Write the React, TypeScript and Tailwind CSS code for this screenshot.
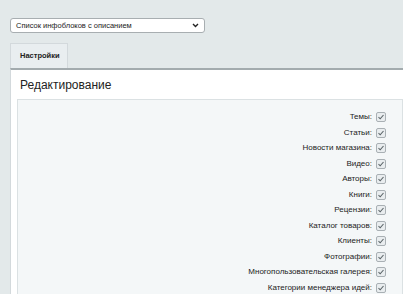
import React from 'react';

const items = [
  'Темы',
  'Статьи',
  'Новости магазина',
  'Видео',
  'Авторы',
  'Книги',
  'Рецензии',
  'Каталог товаров',
  'Клиенты',
  'Фотографии',
  'Многопользовательская галерея',
  'Категории менеджера идей',
];

const Check: React.FC = () => (
  <span className="w-[10px] h-[10px] flex-shrink-0 rounded-[2px] border border-[#a9b0b4] bg-[#e9edef] flex items-center justify-center">
    <svg width="8" height="8" viewBox="0 0 8 8">
      <path d="M1.5 4.2 L3.2 5.8 L6.5 2" fill="none" stroke="#5b6468" strokeWidth="1.1" />
    </svg>
  </span>
);

export default function App() {
  return (
    <div className="w-[403px] h-[294px] overflow-hidden bg-[#e3e9ea] font-['Liberation_Sans',Arial,sans-serif]">
      <div className="pt-[18px] pl-[10px]">
        <div className="w-[195px] h-[15px] bg-white border border-[#a8aeb1] rounded-[3px] flex items-center justify-between px-[5px]">
          <span className="text-[7.5px] text-[#222]">Список инфоблоков с описанием</span>
          <svg width="7" height="5" viewBox="0 0 7 5">
            <path d="M1 1 L3.5 3.5 L6 1" fill="none" stroke="#222" strokeWidth="1.4" />
          </svg>
        </div>
      </div>

      <div className="mt-[10px] ml-[10px]">
        <div className="w-[58px] h-[25px] bg-[#e9eef0] border border-b-0 border-[#d3d9dc] flex items-center pl-[9px]">
          <span className="text-[7.5px] font-bold text-[#222]">Настройки</span>
        </div>
        <div className="bg-white border-t-2 border-t-[#a3abae] border-l border-l-[#d3d9dc] h-[240px]">
          <div className="pl-[9px] pt-[7px] h-[29px] text-[12px] text-[#222] leading-[16px]">Редактирование</div>
          <div className="ml-[6px] bg-[#f4f7f8] border border-[#dbe1e3] h-[220px] pt-[12px] flex flex-col gap-[5.5px] pr-[16px]">
            {items.map((name) => (
              <div key={name} className="flex items-center justify-end gap-[4px] h-[10px]">
                <span className="text-[8px] text-[#222] leading-[10px]">{name}:</span>
                <Check />
              </div>
            ))}
          </div>
        </div>
      </div>
    </div>
  );
}
